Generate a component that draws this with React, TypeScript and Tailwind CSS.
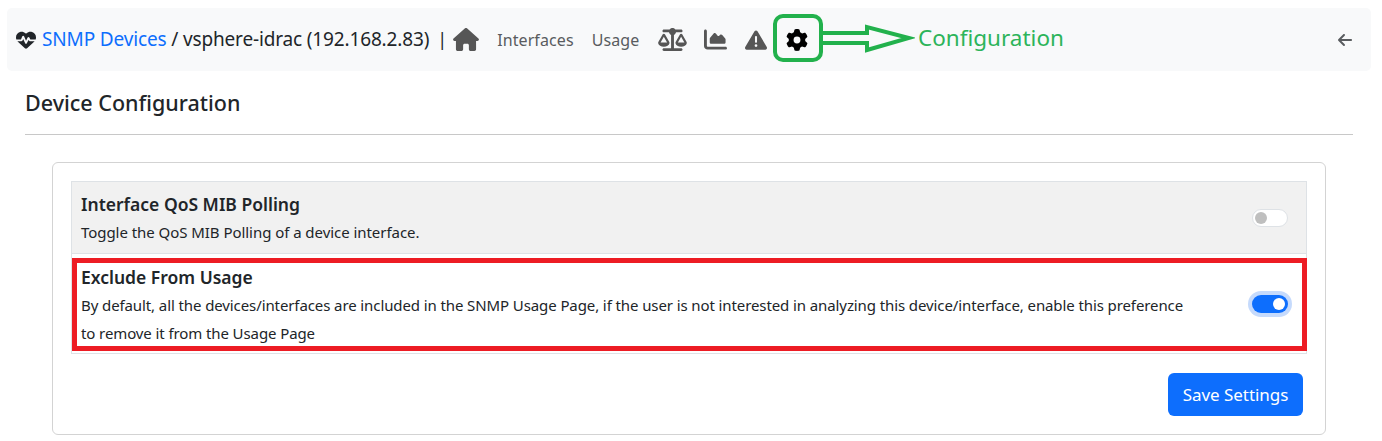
import { FaHeartPulse, FaHouse, FaScaleBalanced, FaChartArea, FaTriangleExclamation, FaGear, FaArrowLeft } from "react-icons/fa6";

export default function App() {
  return (
    <div className="relative h-[441px] w-[1382px] overflow-hidden bg-white font-['Noto_Sans','Open_Sans',sans-serif] text-[#212529]">
      <nav className="ml-[7px] mt-[8px] flex h-[63px] w-[1364px] items-center rounded-[5px] bg-[#f8f9fa] pl-[9px] pr-[18px]">
        <FaHeartPulse className="h-[20px] w-[20px] shrink-0 text-[#212529]" />
        <span className="ml-[6px] whitespace-nowrap text-[19px] tracking-[-0.15px]">
          <span className="text-[#0d6efd]">SNMP Devices</span> / vsphere-idrac (192.168.2.83)
        </span>
        <span className="ml-[8px] text-[18px]">|</span>
        <FaHouse className="ml-[6px] h-[23px] w-[26px] shrink-0 text-[#565656]" />
        <span className="ml-[18px] text-[16px] tracking-[0.1px] text-[#595c5f]">Interfaces</span>
        <span className="ml-[18px] text-[16px] tracking-[0.1px] text-[#595c5f]">Usage</span>
        <FaScaleBalanced className="ml-[19px] h-[23px] w-[29px] shrink-0 text-[#565656]" />
        <FaChartArea className="ml-[17px] h-[23px] w-[23px] shrink-0 text-[#565656]" />
        <FaTriangleExclamation className="ml-[18px] h-[22px] w-[22px] shrink-0 text-[#565656]" />
        <FaGear className="ml-[19px] h-[22px] w-[22px] shrink-0 text-black" />
        <FaArrowLeft className="ml-auto h-[16px] w-[16px] shrink-0 text-[#595c5f]" />
      </nav>

      <main className="px-[25px]">
        <h1 className="pt-[17px] text-[21.5px] font-medium leading-[30px]">Device Configuration</h1>
        <hr className="mt-[16px] w-[1328px] border-t border-[#c8c8c8]" />

        <section className="ml-[27px] mt-[27px] h-[273px] w-[1274px] rounded-[6px] border border-[#d3d3d3] px-[18px] pt-[18px]">
          <div className="flex h-[73px] items-center justify-between border border-[#dee2e6] bg-[#f1f1f1] pl-[9px] pr-[18px]">
            <div>
              <div className="text-[17.5px] font-semibold leading-[24px]">Interface QoS MIB Polling</div>
              <div className="mt-[4px] text-[15px] leading-[24px] tracking-[-0.05px]">Toggle the QoS MIB Polling of a device interface.</div>
            </div>
            <div className="flex h-[18px] w-[36px] items-center rounded-full border border-[#dee2e6] bg-white px-[2px]">
              <div className="h-[12px] w-[12px] rounded-full bg-[#bfbfbf]" />
            </div>
          </div>
          <div className="flex h-[100px] items-center justify-between border-x border-b border-[#dee2e6] pl-[9px] pr-[18px] pt-[5px]">
            <div className="w-[1108px]">
              <div className="text-[17.5px] font-semibold leading-[24px]">Exclude From Usage</div>
              <div className="mt-[2px] text-[15px] leading-[28px] tracking-[-0.1px]">
                By default, all the devices/interfaces are included in the SNMP Usage Page, if the user is not interested in analyzing this device/interface, enable this preference to remove it from the Usage Page
              </div>
            </div>
            <div className="mb-[5px] flex h-[18px] w-[36px] items-center justify-end rounded-full bg-[#0d6efd] px-[3px] shadow-[0_0_0_4px_#c5dafc]">
              <div className="h-[12px] w-[12px] rounded-full bg-white" />
            </div>
          </div>
          <div className="mt-[19px] flex justify-end pr-[4px]">
            <button className="h-[43px] w-[135px] rounded-[6px] bg-[#0d6efd] text-[17px] tracking-[-0.05px] text-white">Save Settings</button>
          </div>
        </section>
      </main>

      {/* annotations */}
      <div className="absolute left-[773px] top-[14px] h-[48px] w-[50px] rounded-[10px] border-[4px] border-[#22b14c]" />
      <svg className="absolute left-[823px] top-[22px]" width="92" height="34" viewBox="0 0 92 34" fill="none" stroke="#22b14c" strokeWidth="4">
        <path d="M0 11 H44 V5 L86 16 L44 28 V21 H0" />
      </svg>
      <span className="absolute left-[918px] top-[22px] text-[22.5px] leading-[32px] text-[#2db45a]">Configuration</span>
      <div className="absolute left-[72px] top-[258px] h-[93px] w-[1235px] border-[5px] border-[#ed1c24]" />
    </div>
  );
}
